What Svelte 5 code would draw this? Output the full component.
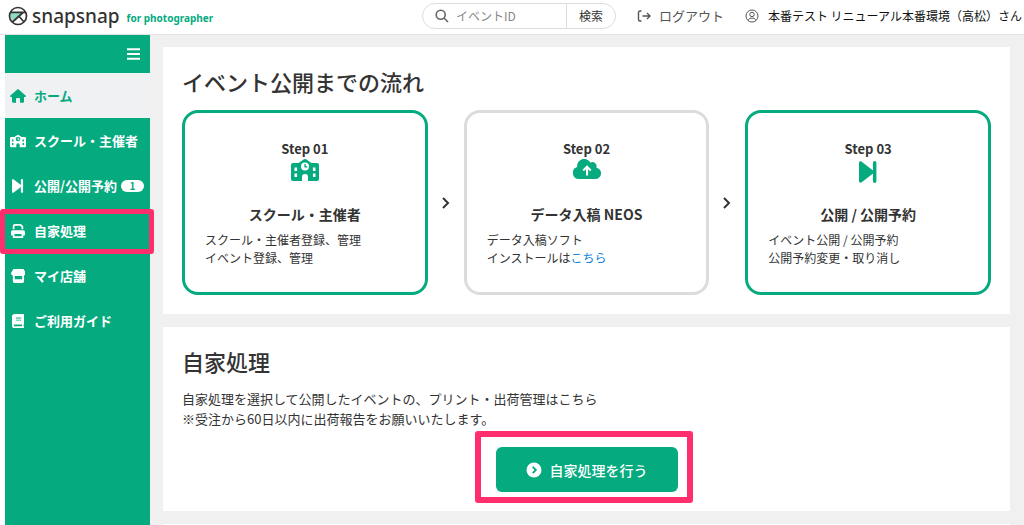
<script>
  let eventId = '';

  const menu = [
    { icon: 'home', label: 'ホーム', active: true },
    { icon: 'school', label: 'スクール・主催者' },
    { icon: 'next', label: '公開/公開予約', count: 1 },
    { icon: 'print', label: '自家処理', marked: true },
    { icon: 'store', label: 'マイ店舗' },
    { icon: 'book', label: 'ご利用ガイド' }
  ];

  const steps = [
    {
      icon: 'school',
      title: 'スクール・主催者',
      lines: ['スクール・主催者登録、管理', 'イベント登録、管理']
    },
    {
      icon: 'cloud',
      title: 'データ入稿 NEOS',
      lines: ['データ入稿ソフト', 'インストールは'],
      link: 'こちら',
      muted: true
    },
    {
      icon: 'next',
      title: '公開 / 公開予約',
      lines: ['イベント公開 / 公開予約', '公開予約変更・取り消し']
    }
  ];
</script>

{#snippet icon(name)}
  {#if name === 'home'}
    <svg class="icon" viewBox="0 0 16 14" aria-hidden="true">
      <path d="M7.3.4a1 1 0 0 1 1.4 0l6.9 6.2c.6.6.2 1.4-.5 1.4H14v4.600a1.200 1.200 0 0 1-1.200 1.200H10V10a1 1 0 0 0-1-1H7a1 1 0 0 0-1 1v3.800H3.200A1.200 1.200 0 0 1 2 12.600V8H.9C.2 8-.2 7.200.4 6.600z" />
    </svg>
  {:else if name === 'school'}
    <svg class="icon" viewBox="0 0 28 22" aria-hidden="true">
      <path
        fill-rule="evenodd"
        d="M13 .3a2 2 0 0 1 2 0L20.500 4H26a2 2 0 0 1 2 2v14a2 2 0 0 1-2 2h-9v-4a3 3 0 0 0-6 0v4H2a2 2 0 0 1-2-2V6a2 2 0 0 1 2-2h5.500zM14 3.500a4 4 0 1 0 0 8 4 4 0 0 0 0-8zM3.500 8.500v3.500h2.600V8.500zm0 6V18h2.600v-3.500zM21.900 8.500v3.500h2.600V8.500zm0 6V18h2.600v-3.500zM13.400 5h1.400v2.200h1.600v1.400h-3z"
      />
    </svg>
  {:else if name === 'next'}
    <svg class="icon" viewBox="0 0 20 24" aria-hidden="true">
      <path d="M0 2.200C0 .5 1.700-.2 3 .9l12.200 9.500V2a1.900 1.900 0 0 1 3.800 0v20a1.900 1.900 0 0 1-3.800 0v-8.400L3 23.100c-1.300 1.100-3 .4-3-1.300z" />
    </svg>
  {:else if name === 'print'}
    <svg class="icon" viewBox="0 0 16 16" aria-hidden="true">
      <path
        fill-rule="evenodd"
        d="M2 2.500A2.500 2.500 0 0 1 4.500 0h6.800L14 2.700V6h-2V3.500L10.500 2H4.500a.5.5 0 0 0-.5.5V6H2zM2.200 7h11.600A2.200 2.200 0 0 1 16 9.200V12a1 1 0 0 1-1 1h-1v2a1 1 0 0 1-1 1H3a1 1 0 0 1-1-1v-2H1a1 1 0 0 1-1-1V9.200A2.200 2.200 0 0 1 2.200 7zM4 11.500V14h8v-2.500z"
      />
    </svg>
  {:else if name === 'store'}
    <svg class="icon" viewBox="0 0 16 15" aria-hidden="true">
      <path
        fill-rule="evenodd"
        d="M2.600 0h10.800L16 4.200C16 6 14.800 7 13.500 7H14v6.200a1.800 1.800 0 0 1-1.800 1.800H3.800A1.800 1.800 0 0 1 2 13.200V7C.9 6.800 0 5.700 0 4.200zM4 7.500v3.500h8V7.500z"
      />
    </svg>
  {:else if name === 'book'}
    <svg class="icon" viewBox="0 0 14 16" aria-hidden="true">
      <path
        fill-rule="evenodd"
        d="M3 0h10a1 1 0 0 1 1 1v10c0 .5-.4.900-.8 1v2H14v2H3a3 3 0 0 1-3-3V3a3 3 0 0 1 3-3zm0 12a1 1 0 0 0 0 2h8.500v-2zM4.500 4v1h6V4zm0 2.500v1h6v-1z"
      />
    </svg>
  {:else if name === 'cloud'}
    <svg class="icon" viewBox="0 0 28 20" aria-hidden="true">
      <path
        fill-rule="evenodd"
        d="M6.200 20A6.200 6.200 0 0 1 4.200 7.900 7 7 0 0 1 17.300 3.600a4.300 4.300 0 0 1 6.100 5.100A5.700 5.700 0 0 1 22.400 20zM14 6.300l-4.500 4.500 1.500 1.500 2-2V16.500h2.100V10.300l2 2 1.400-1.500z"
      />
    </svg>
  {/if}
{/snippet}

<div class="page">
  <header>
    <a class="brand" href="#home">
      <svg class="mark" viewBox="0 0 20 20" aria-hidden="true">
        <path d="M2 6.500h12.500L5 15.200C3 13 2 10 2 6.500z" fill="#8fdcc6" />
        <g fill="none" stroke="#333" stroke-width="1.700">
          <circle cx="10" cy="10" r="8.500" />
          <path d="M2.300 6.300H17.700M15 6.500L4.500 16M11 10.300l5 5.700" />
        </g>
      </svg>
      <span class="name">snapsnap</span>
      <span class="tagline">for photographer</span>
    </a>

    <form class="search" on:submit|preventDefault>
      <svg class="glass" viewBox="0 0 14 14" aria-hidden="true">
        <circle cx="5.700" cy="5.700" r="4.500" />
        <path d="M9 9l4 4" />
      </svg>
      <input type="text" placeholder="イベントID" aria-label="イベントID" bind:value={eventId} />
      <button type="submit">検索</button>
    </form>

    <a class="logout" href="#logout">
      <svg class="line-icon" viewBox="0 0 14 14" aria-hidden="true">
        <path d="M4.500 2H3a1.500 1.500 0 0 0-1.500 1.500v7A1.500 1.500 0 0 0 3 12h1.500M5.500 7H13M10 4l3 3-3 3" />
      </svg>
      ログアウト
    </a>

    <div class="user">
      <svg class="line-icon thin" viewBox="0 0 14 14" aria-hidden="true">
        <circle cx="7" cy="7" r="6" />
        <circle cx="7" cy="5.500" r="2.200" />
        <path d="M3.300 11.500C3.600 9.800 4.700 9.200 6 9.200h2c1.300 0 2.400.6 2.700 2.300" />
      </svg>
      本番テスト リニューアル本番環境（高松）さん
    </div>
  </header>

  <div class="body">
    <nav>
      <div class="nav-top">
        <button class="toggle" aria-label="メニュー">
          <svg viewBox="0 0 13 12" aria-hidden="true">
            <path d="M0 1.200h13M0 6h13M0 10.800h13" />
          </svg>
        </button>
      </div>
      <ul>
        {#each menu as item}
          <li class:marked={item.marked}>
            <a href="#{item.icon}" class:active={item.active}>
              <span class="nav-icon">{@render icon(item.icon)}</span>
              {item.label}
              {#if item.count}
                <span class="badge">{item.count}</span>
              {/if}
            </a>
          </li>
        {/each}
      </ul>
    </nav>

    <main>
      <section>
        <h2>イベント公開までの流れ</h2>
        <div class="steps">
          {#each steps as step, i}
            {#if i > 0}
              <svg class="arrow" viewBox="0 0 8 12" aria-hidden="true">
                <path d="M1 1l5 5-5 5" />
              </svg>
            {/if}
            <article class="step" class:muted={step.muted}>
              <div class="step-no">Step 0{i + 1}</div>
              <div class="step-icon {step.icon}">{@render icon(step.icon)}</div>
              <h3>{step.title}</h3>
              <p>{step.lines[0]}<br />{step.lines[1]}{#if step.link}<a href="#install">{step.link}</a>{/if}</p>
            </article>
          {/each}
        </div>
      </section>

      <section>
        <h2>自家処理</h2>
        <p class="lead">
          自家処理を選択して公開したイベントの、プリント・出荷管理はこちら<br />
          ※受注から60日以内に出荷報告をお願いいたします。
        </p>
        <div class="action marked">
          <button class="primary">
            <svg viewBox="0 0 16 16" aria-hidden="true">
              <circle cx="8" cy="8" r="7.500" fill="#fff" />
              <path d="M6.700 4.800L9.900 8l-3.200 3.200" fill="none" stroke="#05aa7f" stroke-width="1.800" />
            </svg>
            自家処理を行う
          </button>
        </div>
      </section>

      <section class="rest"></section>
    </main>
  </div>
</div>

<style>
  :global(body) {
    margin: 0;
    background: #fff;
  }

  .page {
    display: flex;
    flex-direction: column;
    min-height: 100vh;
    font-family: 'Noto Sans CJK JP', 'Noto Sans', sans-serif;
    font-size: 12px;
    line-height: 18px;
    color: #333;
  }

  button,
  input {
    font: inherit;
    color: inherit;
    border: none;
    background: none;
    padding: 0;
  }

  button {
    cursor: pointer;
  }

  a {
    color: inherit;
    text-decoration: none;
  }

  h2,
  h3,
  p,
  ul {
    margin: 0;
    padding: 0;
  }

  .icon {
    display: block;
    fill: currentColor;
  }

  /* header */
  header {
    display: flex;
    align-items: center;
    height: 35px;
    padding: 0 2px 2px 8px;
    border-bottom: 1px solid #e2e2e2;
    box-sizing: border-box;
    white-space: nowrap;
  }

  .brand {
    display: flex;
    align-items: center;
    margin-right: auto;
  }

  .mark {
    width: 20px;
    height: 20px;
    margin-right: 4px;
  }

  .name {
    font-family: 'Noto Sans', sans-serif;
    font-size: 19px;
    font-weight: 500;
    line-height: 24px;
  }

  .tagline {
    margin: 4px 0 0 7px;
    font-family: 'Noto Sans', sans-serif;
    font-size: 10px;
    font-weight: bold;
    color: #05aa7f;
  }

  .search {
    display: flex;
    align-items: center;
    height: 26px;
    padding-left: 12px;
    border: 1px solid #ddd;
    border-radius: 13px;
    box-sizing: border-box;
  }

  .glass {
    width: 14px;
    height: 14px;
    fill: none;
    stroke: #666;
    stroke-width: 1.6;
  }

  .search input {
    width: 110px;
    margin-left: 7px;
    outline: none;
  }

  .search input::placeholder {
    color: #888;
  }

  .search button {
    align-self: stretch;
    width: 49px;
    border-left: 1px solid #ddd;
  }

  .line-icon {
    width: 14px;
    height: 14px;
    fill: none;
    stroke: #555;
    stroke-width: 1.4;
  }

  .line-icon.thin {
    stroke-width: 1;
  }

  .logout,
  .user {
    display: flex;
    align-items: center;
    gap: 8px;
    margin-left: 21px;
  }

  .logout {
    font-size: 13px;
    color: #555;
  }

  .user {
    gap: 9px;
    color: #111;
  }

  .body {
    display: flex;
    flex: 1;
    padding-left: 5px;
  }

  /* side menu */
  nav {
    position: relative;
    z-index: 1;
    flex: 0 0 145px;
    background: #05aa7f;
    color: #fff;
  }

  .nav-top {
    display: flex;
    align-items: center;
    justify-content: flex-end;
    height: 38px;
    padding-right: 10px;
  }

  .toggle svg {
    display: block;
    width: 13px;
    height: 12px;
    stroke: #fff;
    stroke-width: 2;
  }

  ul {
    list-style: none;
  }

  nav li a {
    display: flex;
    align-items: center;
    height: 45px;
    font-size: 13px;
    font-weight: bold;
    white-space: nowrap;
  }

  nav a.active {
    background: #eff1f3;
    color: #05aa7f;
  }

  .nav-icon {
    display: flex;
    justify-content: center;
    width: 16px;
    margin: 0 8px 0 5px;
  }

  .nav-icon .icon {
    max-width: 16px;
    height: 14px;
  }

  .badge {
    width: 23px;
    margin-left: 4px;
    border-radius: 6px;
    background: #fff;
    color: #05aa7f;
    font-size: 10px;
    line-height: 12px;
    text-align: center;
  }

  /* pink frame that points out the part to click */
  .marked {
    position: relative;
  }

  .marked::after {
    content: '';
    position: absolute;
    inset: 1px -4px -1px -5px;
    border: 5px solid #ff2f6e;
    border-radius: 3px;
    pointer-events: none;
  }

  .action.marked::after {
    inset: -16px -15px -11px -21px;
    border-width: 6px;
  }

  /* content */
  main {
    display: flex;
    flex: 1;
    flex-direction: column;
    gap: 13px;
    padding: 12px 14px 0 13px;
    background: #f0f0f0;
  }

  section {
    padding: 19px;
    background: #fff;
  }

  .rest {
    flex: 1;
    padding: 0;
  }

  h2 {
    font-size: 22px;
    font-weight: 500;
    line-height: 31px;
  }

  .steps {
    display: flex;
    align-items: center;
    margin-top: 13px;
  }

  .step {
    flex: 1;
    padding: 26px 20px 25px;
    border: 3px solid #05aa7f;
    border-radius: 16px;
  }

  .step.muted {
    border-color: #dcdcdc;
  }

  .step-no {
    font-size: 13px;
    font-weight: bold;
    line-height: 20px;
    text-align: center;
  }

  .step-icon {
    display: flex;
    align-items: flex-start;
    justify-content: center;
    height: 24px;
    color: #05aa7f;
  }

  .step-icon.next {
    align-items: flex-end;
  }

  .step-icon .icon {
    height: 22px;
  }

  .step-icon.cloud .icon {
    height: 20px;
  }

  h3 {
    margin: 19px 0 5px;
    font-size: 14px;
    line-height: 24px;
    text-align: center;
  }

  .step a {
    color: #0b82dc;
  }

  .arrow {
    width: 8px;
    height: 12px;
    margin: 0 14px;
    fill: none;
    stroke: #333;
    stroke-width: 2;
  }

  .lead {
    margin-top: 12px;
    font-size: 13px;
    line-height: 20px;
  }

  .action {
    width: fit-content;
    margin: 18px auto 0;
  }

  .primary {
    display: flex;
    align-items: center;
    gap: 8px;
    height: 45px;
    padding: 0 30px;
    border-radius: 6px;
    background: #05aa7f;
    color: #fff;
    font-size: 14px;
    font-weight: 500;
  }

  .primary svg {
    width: 16px;
    height: 16px;
  }
</style>
